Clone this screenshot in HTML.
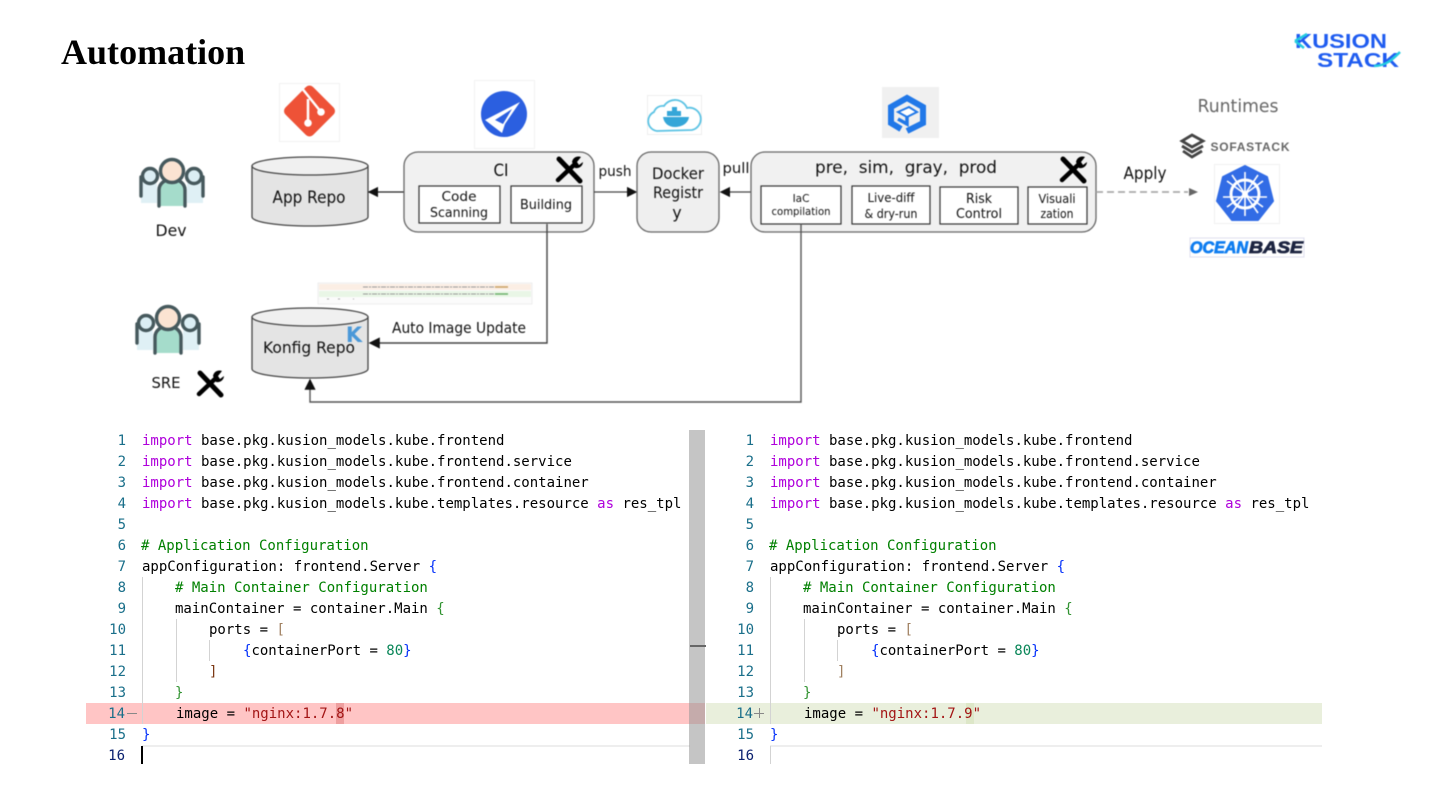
<!DOCTYPE html>
<html lang="en">
<head>
<meta charset="utf-8">
<title>Automation</title>
<style>
html,body{margin:0;padding:0;background:#fff}
body{width:1440px;height:810px;overflow:hidden;position:relative}
h1{position:absolute;left:61px;top:30px;margin:0;font:bold 36px/44px "Liberation Serif",serif;color:#000;letter-spacing:.02px}
svg.d{position:absolute;left:0;top:0;filter:blur(.5px)}
svg.d text{font-family:"DejaVu Sans","Liberation Sans",sans-serif;fill:#111;text-anchor:middle}
.code{position:absolute;left:0;top:0;width:1440px;height:810px;font:14px/21.05px "DejaVu Sans Mono","Liberation Mono",monospace;color:#000;filter:blur(.25px)}
.l{position:absolute;white-space:pre;height:21.05px;margin-top:1px}
.n{position:absolute;text-align:right;width:40px;color:#1a6f8a;height:21.05px;margin-top:1px}
.k{color:#af00db}.c{color:#008000}.s{color:#a31515}.b{color:#0431fa}.g{color:#319331}.m{color:#098658}.o{color:#a08060}.r{color:#7b3814}
.a{position:absolute}
</style>
</head>
<body>
<h1>Automation</h1>

<svg class="d" width="1440" height="420" viewBox="0 0 1440 420" xmlns="http://www.w3.org/2000/svg">
<defs>
<marker id="ar" markerWidth="9" markerHeight="9" refX="7" refY="4" orient="auto"><path d="M0 0L8 4L0 8Z" fill="#111"/></marker>
<g id="tool">
<path d="M-10 -11L11 11" stroke="#000" stroke-width="5" stroke-linecap="round"/>
<path d="M-11 10L6 -6" stroke="#000" stroke-width="4.5" stroke-linecap="round"/>
<path d="M3 -8A6.5 6.5 0 0 1 12 -13L8 -8L10 -5L14 -8A6.5 6.5 0 0 1 6 -2Z" fill="#000"/>
</g>
<g id="ppl">
<path d="M-31 17V0A8 8 0 0 1 -15 0V17Z" fill="#dff0f5"/>
<path d="M31 17V0A8 8 0 0 0 15 0V17Z" fill="#dff0f5"/>
<circle cx="-22" cy="-10" r="7.500" fill="#dbeef4" stroke="#46595d" stroke-width="3.400"/>
<circle cx="22" cy="-10" r="7.500" fill="#dbeef4" stroke="#46595d" stroke-width="3.400"/>
<path d="M-31 10V-9M31 10V-9" stroke="#46595d" stroke-width="3.400" stroke-linecap="round" fill="none"/>
<path d="M-13 20V4A13 11 0 0 1 13 4V20Z" fill="#a5dccb"/>
<path d="M-13 20V4A13 11 0 0 1 13 4V20" fill="none" stroke="#46595d" stroke-width="3.400" stroke-linecap="round"/>
<circle cx="0" cy="-15" r="11.500" fill="#fbe3d2" stroke="#46595d" stroke-width="3.400"/>
</g>
</defs>

<!-- people -->
<use href="#ppl" x="172" y="186"/>
<text x="171" y="236" font-size="16" textLength="31" lengthAdjust="spacingAndGlyphs">Dev</text>
<use href="#ppl" x="168" y="333"/>
<text x="166" y="388" font-size="15" textLength="29" lengthAdjust="spacingAndGlyphs">SRE</text>
<use href="#tool" x="210" y="384"/>

<!-- git -->
<rect x="279.500" y="83.500" width="60" height="58" fill="#fff" stroke="#f1f1f1"/>
<rect x="290" y="91.500" width="39" height="39" rx="5" transform="rotate(45 309.500 111)" fill="#ee5237"/>
<path d="M301 87L321 112M308 99V123" stroke="#fff" stroke-width="2.500" fill="none"/>
<circle cx="308" cy="123" r="3.800" fill="#fff"/><circle cx="321" cy="112" r="3.800" fill="#fff"/>

<!-- CI logo -->
<rect x="474.500" y="80.500" width="60" height="68" fill="#fff" stroke="#f2f2f2"/>
<circle cx="504" cy="114" r="23" fill="#2b5fe0"/>
<path d="M520 102L485 120L502 133L505 124Z" fill="#fff"/><path d="M512 109L495 120L503 124Z" fill="#2b5fe0"/>

<!-- App repo cylinder -->
<path d="M252 166V217A58 9 0 0 0 368 217V166Z" fill="#e4e4e4" stroke="#444" stroke-width="1.300"/>
<ellipse cx="310" cy="166" rx="58" ry="9" fill="#f0f0f0" stroke="#444" stroke-width="1.300"/>
<text x="309" y="203" font-size="16.500" textLength="73" lengthAdjust="spacingAndGlyphs">App Repo</text>

<!-- CI box -->
<line x1="404" y1="192" x2="369" y2="192" stroke="#222" stroke-width="1.300" marker-end="url(#ar)"/>
<rect x="404" y="152" width="190" height="80" rx="14" fill="#f1f1f1" stroke="#666" stroke-width="1.300"/>
<text x="501" y="176" font-size="16.500" textLength="15" lengthAdjust="spacingAndGlyphs">CI</text>
<use href="#tool" x="569" y="170"/>
<rect x="419" y="186" width="81" height="37" fill="#fff" stroke="#333" stroke-width="1.200"/>
<text x="459" y="201" font-size="13.500" textLength="35" lengthAdjust="spacingAndGlyphs">Code</text>
<text x="459" y="217" font-size="13.500" textLength="58" lengthAdjust="spacingAndGlyphs">Scanning</text>
<rect x="511" y="186" width="71" height="37" fill="#fff" stroke="#333" stroke-width="1.200"/>
<text x="546" y="209" font-size="13.500" textLength="52" lengthAdjust="spacingAndGlyphs">Building</text>

<text x="615" y="176" font-size="14" textLength="33" lengthAdjust="spacingAndGlyphs">push</text>
<line x1="594" y1="192" x2="636" y2="192" stroke="#444" stroke-width="1.300" marker-end="url(#ar)"/>

<!-- docker logo -->
<rect x="647.500" y="95.500" width="54" height="39" fill="#fff" stroke="#eee"/>
<path d="M657 131A10 10 0 0 1 654 112A9 9 0 0 1 664 106A13 13 0 0 1 687 108A11 11 0 0 1 692 130Z" fill="#fff" stroke="#5cc3e4" stroke-width="1.800"/>
<path d="M663 117H689C688 124 681 127 675 127C668 127 664 123 663 117Z" fill="#35a6d8"/>
<rect x="667" y="111" width="14" height="5" fill="#35a6d8"/><rect x="672" y="107" width="5" height="4" fill="#35a6d8"/>

<!-- docker box -->
<rect x="637" y="152" width="82" height="80" rx="14" fill="#efefef" stroke="#666" stroke-width="1.300"/>
<text x="678" y="179" font-size="16" textLength="52" lengthAdjust="spacingAndGlyphs">Docker</text>
<text x="678" y="198" font-size="16" textLength="50" lengthAdjust="spacingAndGlyphs">Registr</text>
<text x="677" y="218" font-size="16">y</text>

<text x="736" y="173" font-size="14" textLength="27" lengthAdjust="spacingAndGlyphs">pull</text>
<line x1="751" y1="192" x2="721" y2="192" stroke="#444" stroke-width="1.300" marker-end="url(#ar)"/>

<!-- hex logo -->
<rect x="882" y="87" width="57" height="51" fill="#f0f0f0"/>
<path d="M901 129L891 123V107L907 98L923 107V123L907 131" fill="none" stroke="#2178e8" stroke-width="6"/>
<path d="M898 112L909 107L917 112L907 117Z" fill="#fff" stroke="#2178e8" stroke-width="2"/>
<path d="M907 117V124L898 119" fill="none" stroke="#2178e8" stroke-width="3.500"/>

<!-- pre box -->
<rect x="751" y="152" width="345" height="80" rx="14" fill="#f1f1f1" stroke="#666" stroke-width="1.300"/>
<text x="906" y="173" font-size="17" textLength="182" lengthAdjust="spacingAndGlyphs" style="white-space:pre">pre,  sim,  gray,  prod</text>
<use href="#tool" x="1073" y="170"/>
<rect x="761" y="186" width="80" height="38" fill="#fff" stroke="#333" stroke-width="1.200"/>
<text x="801" y="202" font-size="10.500">IaC</text>
<text x="801" y="215" font-size="11" textLength="59" lengthAdjust="spacingAndGlyphs">compilation</text>
<rect x="852" y="186" width="78" height="38" fill="#fff" stroke="#333" stroke-width="1.200"/>
<text x="891" y="202" font-size="12.500" textLength="47" lengthAdjust="spacingAndGlyphs">Live-diff</text>
<text x="891" y="218" font-size="12.500" textLength="53" lengthAdjust="spacingAndGlyphs">&amp; dry-run</text>
<rect x="940" y="187" width="78" height="37" fill="#fff" stroke="#333" stroke-width="1.200"/>
<text x="979" y="203" font-size="13.500" textLength="26" lengthAdjust="spacingAndGlyphs">Risk</text>
<text x="979" y="218" font-size="13.500" textLength="46" lengthAdjust="spacingAndGlyphs">Control</text>
<rect x="1028" y="187" width="59" height="37" fill="#fff" stroke="#333" stroke-width="1.200"/>
<text x="1057" y="203" font-size="12.500" textLength="37" lengthAdjust="spacingAndGlyphs">Visuali</text>
<text x="1057" y="218" font-size="12.500" textLength="33" lengthAdjust="spacingAndGlyphs">zation</text>

<!-- apply -->
<text x="1145" y="179" font-size="16.500" textLength="43" lengthAdjust="spacingAndGlyphs">Apply</text>
<line x1="1096" y1="192" x2="1188" y2="192" stroke="#aaa" stroke-width="1.800" stroke-dasharray="7 4"/>
<path d="M1189 188L1198 192L1189 196Z" fill="#666"/>

<!-- runtimes -->
<text x="1238" y="112" font-size="17.500" textLength="81" lengthAdjust="spacingAndGlyphs" style="fill:#666">Runtimes</text>
<path d="M1192 135L1203 141L1192 147L1182 141Z" fill="none" stroke="#444" stroke-width="2.800"/>
<path d="M1182 146L1192 152L1203 146M1183 151L1192 157L1202 151" fill="none" stroke="#444" stroke-width="2.800"/>
<text x="1250" y="151" font-size="12" font-weight="bold" textLength="79" lengthAdjust="spacing" style="fill:#666;font-family:'Liberation Sans',sans-serif">SOFASTACK</text>
<rect x="1214.500" y="164.500" width="65" height="59" fill="#fff" stroke="#f0f0f0"/>
<path d="M1245 166L1267 177L1273 201L1258 220H1232L1217 201L1223 177Z" fill="#326ce5" stroke="#326ce5" stroke-width="2" stroke-linejoin="round"/>
<circle cx="1245" cy="194" r="14" fill="none" stroke="#fff" stroke-width="3"/>
<circle cx="1245" cy="194" r="3" fill="#fff"/>
<path d="M1245 172V216M1227 181L1263 207M1263 181L1227 207M1223 197H1267M1232 213L1258 175M1258 213L1232 175" stroke="#fff" stroke-width="1.600"/>

<!-- oceanbase -->
<rect x="1190" y="238" width="114" height="19" fill="#fff" stroke="#dde"/>
<text x="1219" y="253" font-size="17" font-weight="bold" font-style="italic" textLength="58" lengthAdjust="spacingAndGlyphs" style="fill:#0f7df0;stroke:#0f7df0;stroke-width:.8;font-family:'Liberation Sans',sans-serif">OCEAN</text>
<text x="1276" y="253" font-size="17" font-weight="bold" font-style="italic" textLength="54" lengthAdjust="spacingAndGlyphs" style="fill:#1c2440;stroke:#1c2440;stroke-width:.8;font-family:'Liberation Sans',sans-serif">BASE</text>

<!-- kusion logo -->
<text x="1341" y="48" font-size="20" font-weight="bold" textLength="92" lengthAdjust="spacingAndGlyphs" style="fill:#1f5cf0;font-family:'Liberation Sans',sans-serif">KUSION</text>
<text x="1358" y="67" font-size="20" font-weight="bold" textLength="82" lengthAdjust="spacingAndGlyphs" style="fill:#1f5cf0;font-family:'Liberation Sans',sans-serif">STACK</text>
<path d="M1295 41L1307 34M1295 41L1304 48M1374 66C1386 66 1393 59 1400 52" fill="none" stroke="#23cbe0" stroke-width="2.500"/>

<!-- small diff image -->
<rect x="318" y="283" width="214" height="21" fill="#fbfbfb" stroke="#eee"/>
<rect x="319" y="284" width="212" height="6" fill="#fbeee4"/>
<rect x="319" y="291" width="212" height="6" fill="#e9f6e6"/>
<path d="M363 287H495M363 294H495" stroke="#999" stroke-width="1" stroke-dasharray="5 1 2 1"/>
<path d="M495 287H508" stroke="#c8a060" stroke-width="1.500"/>
<path d="M495 294H508" stroke="#6ab06a" stroke-width="1.500"/>
<path d="M327 299h2M338 299h2M353 299h1" stroke="#aaa" stroke-width="1"/>

<!-- connectors -->
<path d="M547 224V343H370" fill="none" stroke="#444" stroke-width="1.400" marker-end="url(#ar)"/>
<path d="M801 224V402H310V380" fill="none" stroke="#555" stroke-width="1.400" marker-end="url(#ar)"/>

<!-- konfig cylinder -->
<path d="M252 317V369A58 9 0 0 0 368 369V317Z" fill="#e4e4e4" stroke="#444" stroke-width="1.300"/>
<ellipse cx="310" cy="317" rx="58" ry="9" fill="#f0f0f0" stroke="#444" stroke-width="1.300"/>
<text x="354" y="342" font-size="21" font-weight="bold" style="fill:#4a98d8">K</text>
<text x="309" y="353" font-size="16" textLength="92" lengthAdjust="spacingAndGlyphs">Konfig Repo</text>
<text x="459" y="333" font-size="15.500" textLength="134" lengthAdjust="spacingAndGlyphs">Auto Image Update</text>
</svg>

<div class="code">
<!-- backgrounds -->
<div class="a" style="left:86px;top:703px;width:619px;height:21px;background:#ffc5c5"></div>
<div class="a" style="left:336px;top:703px;width:8px;height:21px;background:#ee9f9f"></div>
<div class="a" style="left:706px;top:703px;width:616px;height:21px;background:#e9efdc"></div>
<div class="a" style="left:966px;top:703px;width:8px;height:21px;background:#dde7c8"></div>
<div class="a" style="left:142px;top:745px;width:548px;height:2px;background:#eee"></div>
<div class="a" style="left:770px;top:745px;width:552px;height:2px;background:#eee"></div>
<div class="a" style="left:689px;top:430px;width:16px;height:334px;background:rgba(150,150,150,.55)"></div>
<div class="a" style="left:690px;top:645px;width:16px;height:2px;background:#666"></div>
<div class="a" style="left:141px;top:746px;width:2px;height:18px;background:#000"></div>

<!-- guides -->
<div class="a" style="left:142px;top:577px;width:1px;height:147px;background:#d3d3d3"></div>
<div class="a" style="left:176px;top:619px;width:1px;height:63px;background:#d3d3d3"></div>
<div class="a" style="left:209px;top:640px;width:1px;height:21px;background:#d3d3d3"></div>
<div class="a" style="left:770px;top:577px;width:1px;height:147px;background:#d3d3d3"></div>
<div class="a" style="left:770px;top:746px;width:1px;height:18px;background:#d3d3d3"></div>
<div class="a" style="left:804px;top:619px;width:1px;height:63px;background:#d3d3d3"></div>
<div class="a" style="left:837px;top:640px;width:1px;height:21px;background:#d3d3d3"></div>

<!-- left numbers -->
<div class="n" style="left:86px;top:430px">1</div>
<div class="n" style="left:86px;top:451px">2</div>
<div class="n" style="left:86px;top:472px">3</div>
<div class="n" style="left:86px;top:493px">4</div>
<div class="n" style="left:86px;top:514px">5</div>
<div class="n" style="left:86px;top:535px">6</div>
<div class="n" style="left:86px;top:556px">7</div>
<div class="n" style="left:86px;top:577px">8</div>
<div class="n" style="left:86px;top:598px">9</div>
<div class="n" style="left:86px;top:619px">10</div>
<div class="n" style="left:86px;top:640px">11</div>
<div class="n" style="left:86px;top:661px">12</div>
<div class="n" style="left:86px;top:682px">13</div>
<div class="n" style="left:85px;top:703px">14</div>
<div class="n" style="left:86px;top:724px">15</div>
<div class="n" style="left:85px;top:745px;color:#0b216f">16</div>
<div class="a" style="left:127px;top:713px;width:10px;height:1px;background:#888"></div>

<!-- left code -->
<div class="l" style="left:142px;top:430px"><span class="k">import</span> base.pkg.kusion_models.kube.frontend</div>
<div class="l" style="left:142px;top:451px"><span class="k">import</span> base.pkg.kusion_models.kube.frontend.service</div>
<div class="l" style="left:142px;top:472px"><span class="k">import</span> base.pkg.kusion_models.kube.frontend.container</div>
<div class="l" style="left:142px;top:493px"><span class="k">import</span> base.pkg.kusion_models.kube.templates.resource <span class="k">as</span> res_tpl</div>
<div class="l c" style="left:141px;top:535px"># Application Configuration</div>
<div class="l" style="left:142px;top:556px">appConfiguration: frontend.Server <span class="b">{</span></div>
<div class="l c" style="left:175px;top:577px"># Main Container Configuration</div>
<div class="l" style="left:175px;top:598px">mainContainer = container.Main <span class="g">{</span></div>
<div class="l" style="left:209px;top:619px">ports = <span class="o">[</span></div>
<div class="l" style="left:243px;top:640px"><span class="b">{</span>containerPort = <span class="m">80</span><span class="b">}</span></div>
<div class="l r" style="left:209px;top:661px">]</div>
<div class="l g" style="left:175px;top:682px">}</div>
<div class="l" style="left:176px;top:703px">image = <span class="s">"nginx:1.7.8"</span></div>
<div class="l b" style="left:142px;top:724px">}</div>

<!-- right numbers -->
<div class="n" style="left:714px;top:430px">1</div>
<div class="n" style="left:714px;top:451px">2</div>
<div class="n" style="left:714px;top:472px">3</div>
<div class="n" style="left:714px;top:493px">4</div>
<div class="n" style="left:714px;top:514px">5</div>
<div class="n" style="left:714px;top:535px">6</div>
<div class="n" style="left:714px;top:556px">7</div>
<div class="n" style="left:714px;top:577px">8</div>
<div class="n" style="left:714px;top:598px">9</div>
<div class="n" style="left:714px;top:619px">10</div>
<div class="n" style="left:714px;top:640px">11</div>
<div class="n" style="left:714px;top:661px">12</div>
<div class="n" style="left:714px;top:682px">13</div>
<div class="n" style="left:713px;top:703px">14</div>
<div class="n" style="left:714px;top:724px">15</div>
<div class="n" style="left:714px;top:745px;color:#0b216f">16</div>
<div class="a" style="left:754px;top:713px;width:10px;height:1px;background:#888"></div>
<div class="a" style="left:759px;top:708px;width:1px;height:10px;background:#888"></div>

<!-- right code -->
<div class="l" style="left:770px;top:430px"><span class="k">import</span> base.pkg.kusion_models.kube.frontend</div>
<div class="l" style="left:770px;top:451px"><span class="k">import</span> base.pkg.kusion_models.kube.frontend.service</div>
<div class="l" style="left:770px;top:472px"><span class="k">import</span> base.pkg.kusion_models.kube.frontend.container</div>
<div class="l" style="left:770px;top:493px"><span class="k">import</span> base.pkg.kusion_models.kube.templates.resource <span class="k">as</span> res_tpl</div>
<div class="l c" style="left:769px;top:535px"># Application Configuration</div>
<div class="l" style="left:770px;top:556px">appConfiguration: frontend.Server <span class="b">{</span></div>
<div class="l c" style="left:803px;top:577px"># Main Container Configuration</div>
<div class="l" style="left:803px;top:598px">mainContainer = container.Main <span class="g">{</span></div>
<div class="l" style="left:837px;top:619px">ports = <span class="o">[</span></div>
<div class="l" style="left:871px;top:640px"><span class="b">{</span>containerPort = <span class="m">80</span><span class="b">}</span></div>
<div class="l o" style="left:837px;top:661px">]</div>
<div class="l g" style="left:803px;top:682px">}</div>
<div class="l" style="left:804px;top:703px">image = <span class="s">"nginx:1.7.9"</span></div>
<div class="l b" style="left:770px;top:724px">}</div>
</div>
</body>
</html>
